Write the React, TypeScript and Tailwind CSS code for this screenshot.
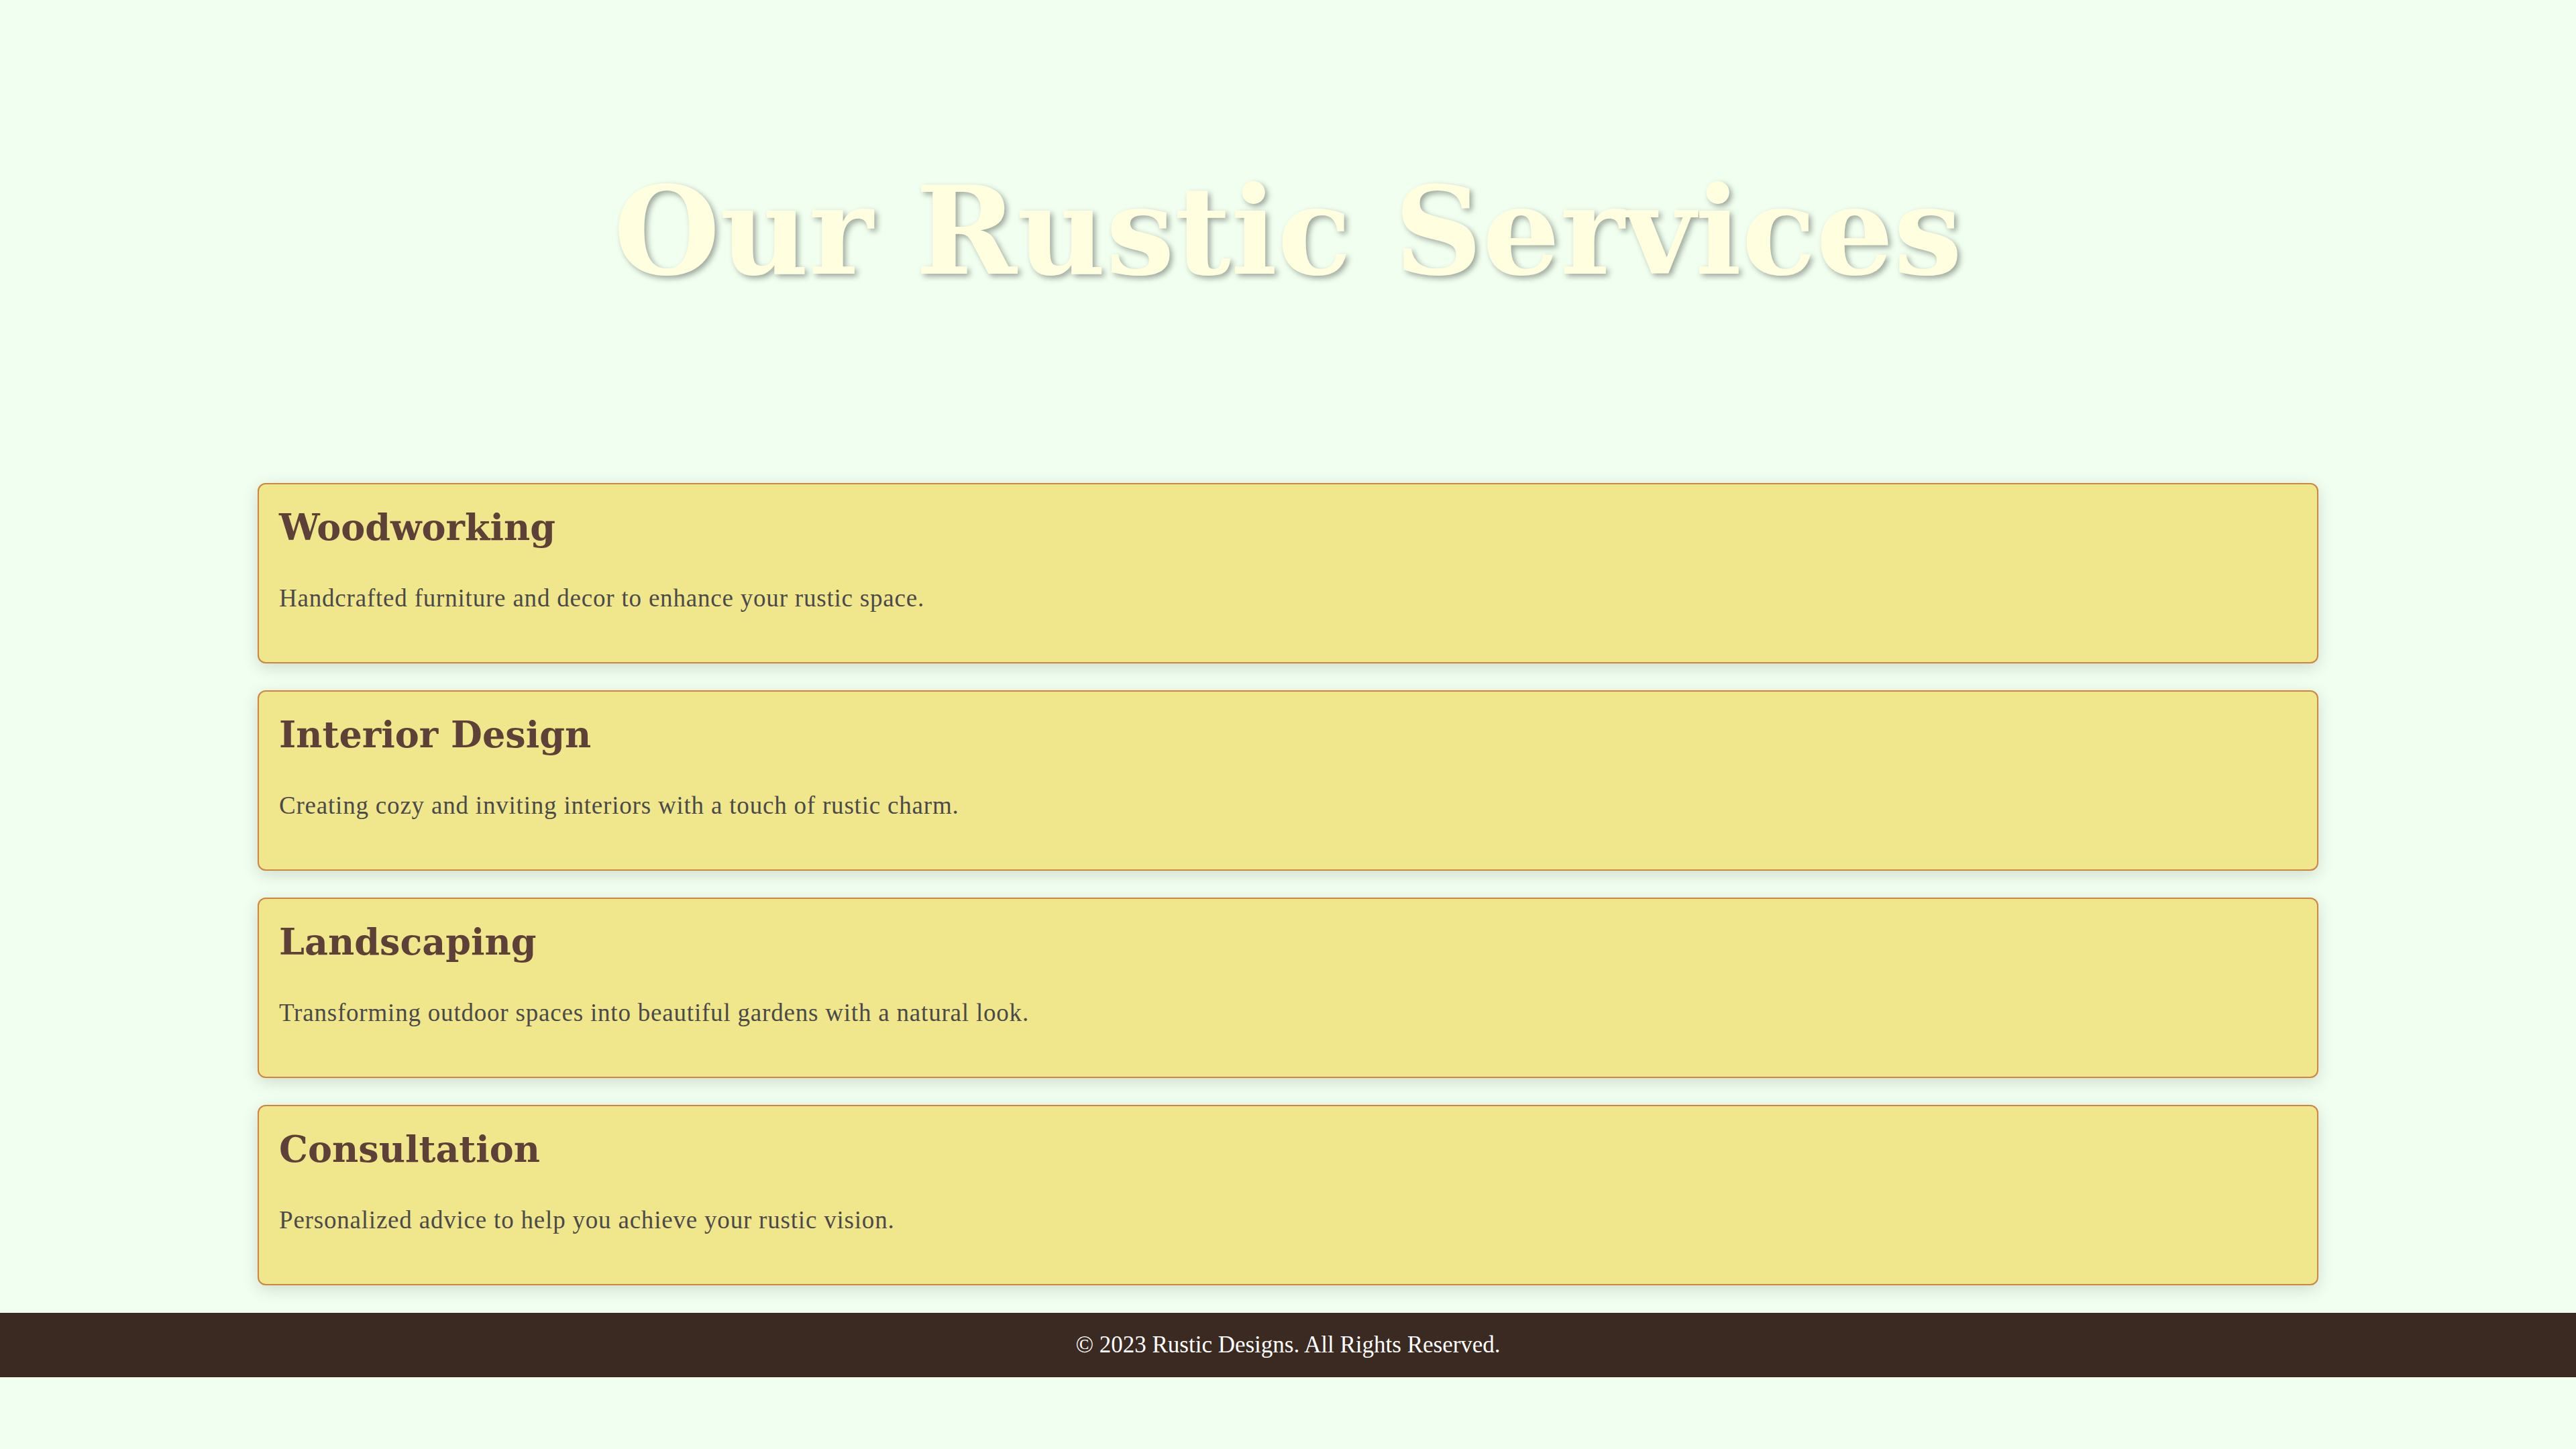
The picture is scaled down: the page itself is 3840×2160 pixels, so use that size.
import React from 'react';

const services = [
  { title: 'Woodworking', text: 'Handcrafted furniture and decor to enhance your rustic space.' },
  { title: 'Interior Design', text: 'Creating cozy and inviting interiors with a touch of rustic charm.' },
  { title: 'Landscaping', text: 'Transforming outdoor spaces into beautiful gardens with a natural look.' },
  { title: 'Consultation', text: 'Personalized advice to help you achieve your rustic vision.' },
];

const App = () => {
  return (
    <div className="min-h-screen bg-[#F0FFF0] font-['Liberation_Serif',serif]">
      {/* Header */}
      <header className="pt-[235px] pb-[267px] text-center">
        <h1 className="font-['DejaVu_Serif',serif] text-[182px] leading-[218px] font-bold text-[#FFFFE0] [text-shadow:4px_4px_8px_rgba(0,0,0,0.35)]">
          Our Rustic Services
        </h1>
      </header>

      {/* Service cards */}
      <main className="w-[80%] mx-auto flex flex-col gap-[40px]">
        {services.map((s) => (
          <section
            key={s.title}
            className="h-[269px] bg-[#F0E68C] border-2 border-[#CD853F] rounded-[12px] pt-[29px] px-[30px] shadow-[0_6px_24px_rgba(0,0,0,0.14)]"
          >
            <h2 className="font-['DejaVu_Serif',serif] text-[54px] leading-[70px] font-bold text-[#5D4037]">
              {s.title}
            </h2>
            <p className="mt-[46px] text-[37px] leading-[50px] tracking-[0.8px] text-[#4A4A4A]">{s.text}</p>
          </section>
        ))}
      </main>

      {/* Footer */}
      <footer className="mt-[41px] h-[96px] bg-[#3A2A21] flex items-center justify-center">
        <p className="text-[35px] text-white">© 2023 Rustic Designs. All Rights Reserved.</p>
      </footer>
    </div>
  );
};

export default App;
